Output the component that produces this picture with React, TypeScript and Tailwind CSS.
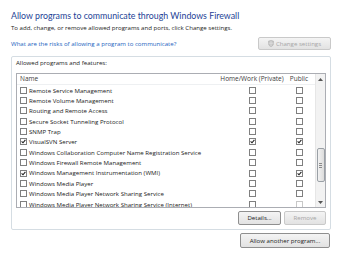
import React from "react";

type Row = { name: string; n: boolean; h: boolean; p: boolean; dim?: boolean };

const rows: Row[] = [
  { name: "Remote Service Management", n: false, h: false, p: false },
  { name: "Remote Volume Management", n: false, h: false, p: false },
  { name: "Routing and Remote Access", n: false, h: false, p: false },
  { name: "Secure Socket Tunneling Protocol", n: false, h: false, p: false },
  { name: "SNMP Trap", n: false, h: false, p: false },
  { name: "VisualSVN Server", n: true, h: true, p: true },
  { name: "Windows Collaboration Computer Name Registration Service", n: false, h: false, p: false },
  { name: "Windows Firewall Remote Management", n: false, h: false, p: false },
  { name: "Windows Management Instrumentation (WMI)", n: true, h: false, p: true },
  { name: "Windows Media Player", n: false, h: false, p: false },
  { name: "Windows Media Player Network Sharing Service", n: false, h: false, p: false },
  { name: "Windows Media Player Network Sharing Service (Internet)", n: false, h: false, p: false, dim: true },
];

function Box({ checked, dim }: { checked: boolean; dim?: boolean }) {
  return (
    <span
      className={
        "w-[7px] h-[7px] shrink-0 border bg-white flex items-center justify-center " +
        (dim ? "border-[#c8c8c8]" : "border-[#7f7f7f]")
      }
    >
      {checked && (
        <svg width="5" height="5" viewBox="0 0 5 5">
          <path d="M0.6 2.4 L2 3.8 L4.4 0.8" fill="none" stroke="#222" strokeWidth="1.1" />
        </svg>
      )}
    </span>
  );
}

function Btn({ children, w, disabled }: { children: React.ReactNode; w: string; disabled?: boolean }) {
  return (
    <div
      className={
        "h-full shrink-0 flex items-center justify-center rounded-[2px] border bg-gradient-to-b from-[#f4f4f4] to-[#e2e2e2] " +
        w +
        (disabled ? " border-[#c9c9c9] text-[#a6a6a6]" : " border-[#8f8f8f] text-[#222]")
      }
    >
      {children}
    </div>
  );
}

export default function App() {
  return (
    <div
      className="w-[338px] h-[256px] bg-white overflow-hidden pl-[11px] pt-[10px]"
      style={{ fontFamily: '"Open Sans", "Noto Sans", sans-serif' }}
    >
      <div
        className="h-[12px] leading-[12px] text-[8.8px] text-[#1e3f96] whitespace-nowrap"
        style={{ fontFamily: 'Lato, "Open Sans", sans-serif' }}
      >
        Allow programs to communicate through Windows Firewall
      </div>
      <div className="mt-[1px] h-[10px] leading-[10px] text-[6.1px] text-[#222] whitespace-nowrap">
        To add, change, or remove allowed programs and ports, click Change settings.
      </div>
      <div className="mt-[4px] h-[13px] w-[320px] flex items-center justify-between">
        <span className="text-[6.1px] leading-[10px] text-[#1c5fc0] whitespace-nowrap">
          What are the risks of allowing a program to communicate?
        </span>
        <Btn w="w-[73px]" disabled>
          <span className="flex items-center gap-[2px] text-[6.1px]">
            <svg width="6" height="7" viewBox="0 0 6 7">
              <path d="M3 0.3 L5.6 1.2 V3.4 C5.6 5 4.3 6.2 3 6.7 C1.7 6.2 0.4 5 0.4 3.4 V1.2 Z" fill="#c4c4c4" stroke="#aaa" strokeWidth="0.5" />
              <path d="M3 0.6 V6.4 M0.6 3.2 H5.4" stroke="#e8e8e8" strokeWidth="0.6" />
            </svg>
            Change settings
          </span>
        </Btn>
      </div>
      <div className="mt-[6px] w-[320px] h-[174px] border border-[#d5dde3] rounded-[2px] px-[4px] flex flex-col">
        <div className="h-[12px] leading-[12px] text-[6.1px] text-[#222] whitespace-nowrap">
          Allowed programs and features:
        </div>
        <div className="mt-[4px] h-[135px] w-[310px] border border-[#abadb3] flex overflow-hidden">
          <div className="flex-1 flex flex-col overflow-hidden">
            <div className="h-[11px] shrink-0 flex items-center text-[6.5px] text-[#3c3c3c] border-b border-[#eef0f2]">
              <div className="flex-1 pl-[3px]">Name</div>
              <div className="w-[70px] text-center whitespace-nowrap">Home/Work (Private)</div>
              <div className="w-[24px] text-center">Public</div>
              <div className="w-[4px]" />
            </div>
            {rows.map((r) => (
              <div key={r.name} className="h-[10.36px] shrink-0 flex items-center text-[6.1px] text-[#222]">
                <div className="flex-1 pl-[3px] flex items-center gap-[2px] whitespace-nowrap overflow-hidden">
                  <Box checked={r.n} />
                  <span>{r.name}</span>
                </div>
                <div className="w-[70px] flex justify-center">
                  <Box checked={r.h} />
                </div>
                <div className="w-[24px] flex justify-center">
                  <Box checked={r.p} dim={r.dim} />
                </div>
                <div className="w-[4px]" />
              </div>
            ))}
          </div>
          <div className="w-[10px] shrink-0 bg-[#f2f2f2] border-l border-[#e6e6e6] flex flex-col items-center">
            <div className="h-[11px] flex items-center justify-center">
              <svg width="5" height="3" viewBox="0 0 5 3">
                <path d="M0 3 L2.5 0 L5 3 Z" fill="#555" />
              </svg>
            </div>
            <div className="mt-[63px] h-[34px] w-[8px] rounded-[2px] border border-[#9aa0a6] bg-gradient-to-r from-[#f2f2f2] to-[#dcdcdc] flex flex-col items-center justify-center gap-[1px]">
              <span className="w-[3px] h-[1px] bg-[#8a8a8a]" />
              <span className="w-[3px] h-[1px] bg-[#8a8a8a]" />
              <span className="w-[3px] h-[1px] bg-[#8a8a8a]" />
            </div>
            <div className="flex-1" />
            <div className="h-[10px] flex items-center justify-center">
              <svg width="5" height="3" viewBox="0 0 5 3">
                <path d="M0 0 L2.5 3 L5 0 Z" fill="#555" />
              </svg>
            </div>
          </div>
        </div>
        <div className="mt-[3px] h-[14px] flex justify-end gap-[3px]">
          <Btn w="w-[43px]">
            <span className="text-[6.1px]">Details...</span>
          </Btn>
          <Btn w="w-[42px]" disabled>
            <span className="text-[6.1px]">Remove</span>
          </Btn>
        </div>
      </div>
      <div className="mt-[3px] h-[15px] w-[320px] flex justify-end">
        <div className="mr-[1px] h-full">
          <Btn w="w-[90px]">
            <span className="text-[6.1px]">Allow another program...</span>
          </Btn>
        </div>
      </div>
    </div>
  );
}
